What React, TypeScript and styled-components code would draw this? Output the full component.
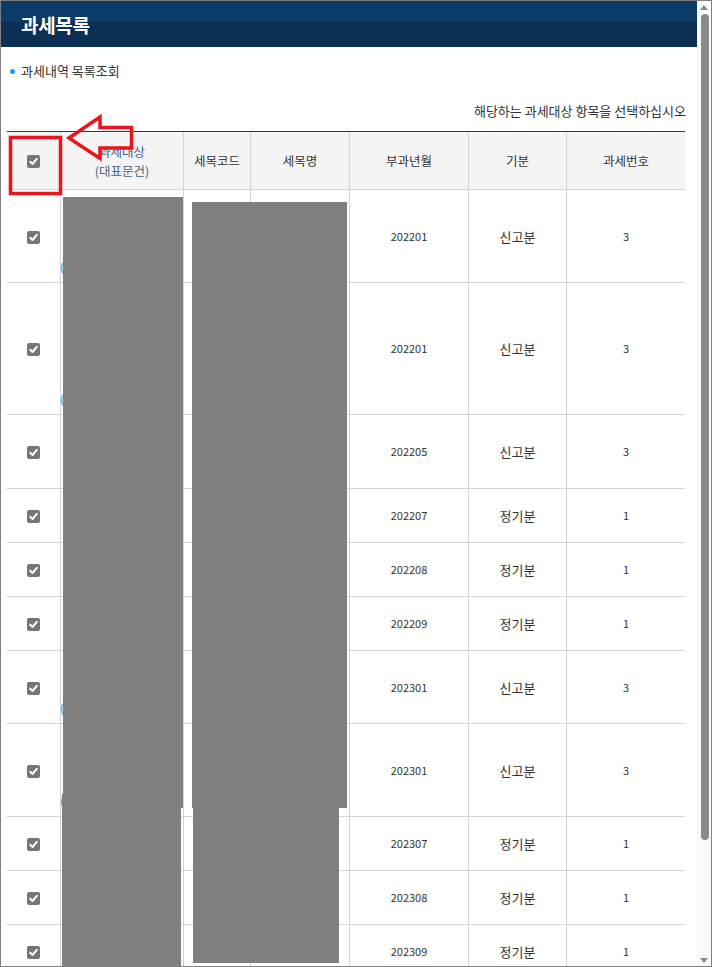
import React from "react";
import styled, { createGlobalStyle } from "styled-components";

const GlobalStyle = createGlobalStyle`
  html, body {
    margin: 0;
    padding: 0;
    background: #fff;
  }
  body {
    font-family: "Noto Sans CJK KR", "Noto Sans", "Liberation Sans", sans-serif;
    color: #333;
  }
`;

type TaxRow = {
  ym: string;
  kind: string;
  no: string;
  h: number;
  link?: boolean;
};

const rows: TaxRow[] = [
  { ym: "202201", kind: "신고분", no: "3", h: 93, link: true },
  { ym: "202201", kind: "신고분", no: "3", h: 132, link: true },
  { ym: "202205", kind: "신고분", no: "3", h: 74 },
  { ym: "202207", kind: "정기분", no: "1", h: 54 },
  { ym: "202208", kind: "정기분", no: "1", h: 54 },
  { ym: "202209", kind: "정기분", no: "1", h: 54 },
  { ym: "202301", kind: "신고분", no: "3", h: 73, link: true },
  { ym: "202301", kind: "신고분", no: "3", h: 93, link: true },
  { ym: "202307", kind: "정기분", no: "1", h: 54 },
  { ym: "202308", kind: "정기분", no: "1", h: 54 },
  { ym: "202309", kind: "정기분", no: "1", h: 54 },
];

// 가려진 영역 (표 기준 좌표)
const masks = [
  { left: 56, top: 65, width: 120, height: 611 },
  { left: 55, top: 662, width: 119, height: 300 },
  { left: 185, top: 70, width: 155, height: 606 },
  { left: 186, top: 676, width: 146, height: 155 },
];

const COLS = "53px 123px 67px 99px 119px 98px 119px";

const Window = styled.div`
  display: flex;
  width: 712px;
  height: 967px;
  box-sizing: border-box;
  border: 1px solid #808080;
  overflow: hidden;
`;

const Main = styled.div`
  flex: 1;
  min-width: 0;
  overflow: hidden;
`;

const TitleBar = styled.div`
  height: 46px;
  display: flex;
  align-items: center;
  padding-left: 20px;
  background: linear-gradient(to bottom, #0b3c67 0, #0b3c67 46%, #0c2f54 46%, #0c2f54 100%);
  color: #fff;
  font-size: 19px;
  font-weight: 700;
  letter-spacing: -0.3px;
`;

const Body = styled.div`
  padding: 0 11px 0 6px;
`;

const SubTitle = styled.div`
  position: relative;
  margin-top: 14px;
  height: 20px;
  line-height: 20px;
  padding-left: 14px;
  font-size: 13px;
  color: #333;

  &::before {
    content: "";
    position: absolute;
    left: 3px;
    top: 8px;
    width: 5px;
    height: 5px;
    border-radius: 50%;
    background: #1e9be8;
  }
`;

const Guide = styled.div`
  margin-top: 21px;
  height: 18px;
  line-height: 18px;
  text-align: right;
  font-size: 13px;
  color: #333;
`;

const TableWrap = styled.div`
  position: relative;
  margin-top: 11px;
  width: 678px;
  border-top: 1px solid #3a3a3a;
`;

const Row = styled.div<{ $h: number; $head?: boolean }>`
  display: grid;
  grid-template-columns: ${COLS};
  height: ${(p) => p.$h}px;
  box-sizing: border-box;
  border-bottom: 1px solid #d4d4d4;
  background: ${(p) => (p.$head ? "#f4f4f4" : "#fff")};
`;

const Cell = styled.div<{ $size?: number; $color?: string }>`
  display: flex;
  flex-direction: column;
  align-items: center;
  justify-content: center;
  font-size: ${(p) => p.$size ?? 12.5}px;
  line-height: 19px;
  color: ${(p) => p.$color ?? "#333"};
  text-align: center;
  & + & {
    border-left: 1px solid #d4d4d4;
  }
`;

const TargetCell = styled(Cell)`
  align-items: flex-start;
  justify-content: flex-end;
  padding: 0 0 6px 0;
`;

const LinkText = styled.span`
  margin-left: -1px;
  color: #2a72c8;
  font-size: 12px;
  white-space: nowrap;
`;

const Box = styled.span`
  display: flex;
  align-items: center;
  justify-content: center;
  margin-top: 2px;
  width: 13px;
  height: 13px;
  border-radius: 2px;
  background: #767676;
`;

const Mask = styled.div`
  position: absolute;
  background: #808080;
`;

const Annotation = styled.svg`
  position: absolute;
  left: -7px;
  top: -131px;
  pointer-events: none;
`;

const ScrollBar = styled.div`
  width: 14px;
  display: flex;
  flex-direction: column;
  background: #fafafa;
`;

const ArrowBtn = styled.div`
  height: 12px;
  display: flex;
  align-items: center;
  justify-content: center;
`;

const Track = styled.div`
  flex: 1;
  display: flex;
  flex-direction: column;
`;

const Thumb = styled.div`
  margin: 1px 0 0 4px;
  width: 8px;
  height: 826px;
  border-radius: 4px;
  background: #8b8b8b;
`;

const CheckBox = () => (
  <Box>
    <svg width="11" height="11" viewBox="0 0 11 11">
      <path d="M2.3 5.8 L4.5 8 L8.8 2.8" fill="none" stroke="#fff" strokeWidth="2" strokeLinecap="round" strokeLinejoin="round" />
    </svg>
  </Box>
);

const Triangle = ({ up }: { up?: boolean }) => (
  <svg width="8" height="5" viewBox="0 0 8 5">
    <path d={up ? "M0 5 L4 0 L8 5 Z" : "M0 0 L8 0 L4 5 Z"} fill="#8a8a8a" />
  </svg>
);

export default function App() {
  return (
    <>
      <GlobalStyle />
      <Window>
        <Main>
          <TitleBar>과세목록</TitleBar>
          <Body>
            <SubTitle>과세내역 목록조회</SubTitle>
            <Guide>해당하는 과세대상 항목을 선택하십시오</Guide>
            <TableWrap>
              <Row $h={58} $head>
                <Cell>
                  <CheckBox />
                </Cell>
                <Cell $color="#4a5f85">
                  <span>과세대상</span>
                  <span>(대표문건)</span>
                </Cell>
                <Cell>세목코드</Cell>
                <Cell>세목명</Cell>
                <Cell>부과년월</Cell>
                <Cell>기분</Cell>
                <Cell>과세번호</Cell>
              </Row>
              {rows.map((r, i) => (
                <Row key={i} $h={r.h}>
                  <Cell>
                    <CheckBox />
                  </Cell>
                  <TargetCell>{r.link && <LinkText>(대표)</LinkText>}</TargetCell>
                  <Cell />
                  <Cell />
                  <Cell $size={11}>{r.ym}</Cell>
                  <Cell $size={13}>{r.kind}</Cell>
                  <Cell $size={11}>{r.no}</Cell>
                </Row>
              ))}
              {masks.map((m, i) => (
                <Mask key={i} style={{ left: m.left, top: m.top, width: m.width, height: m.height }} />
              ))}
              <Annotation width="160" height="200" viewBox="0 0 160 200">
                <rect x="10.5" y="136.5" width="50" height="56" fill="none" stroke="#e8151d" strokeWidth="3.5" />
                <path
                  d="M69 137 L100 116 L100 126.5 L131.5 126.5 L131.5 147 L100 147 L100 157.5 Z"
                  fill="none"
                  stroke="#e8151d"
                  strokeWidth="3.5"
                  strokeLinejoin="miter"
                />
              </Annotation>
            </TableWrap>
          </Body>
        </Main>
        <ScrollBar>
          <ArrowBtn>
            <Triangle up />
          </ArrowBtn>
          <Track>
            <Thumb />
          </Track>
          <ArrowBtn>
            <Triangle />
          </ArrowBtn>
        </ScrollBar>
      </Window>
    </>
  );
}
